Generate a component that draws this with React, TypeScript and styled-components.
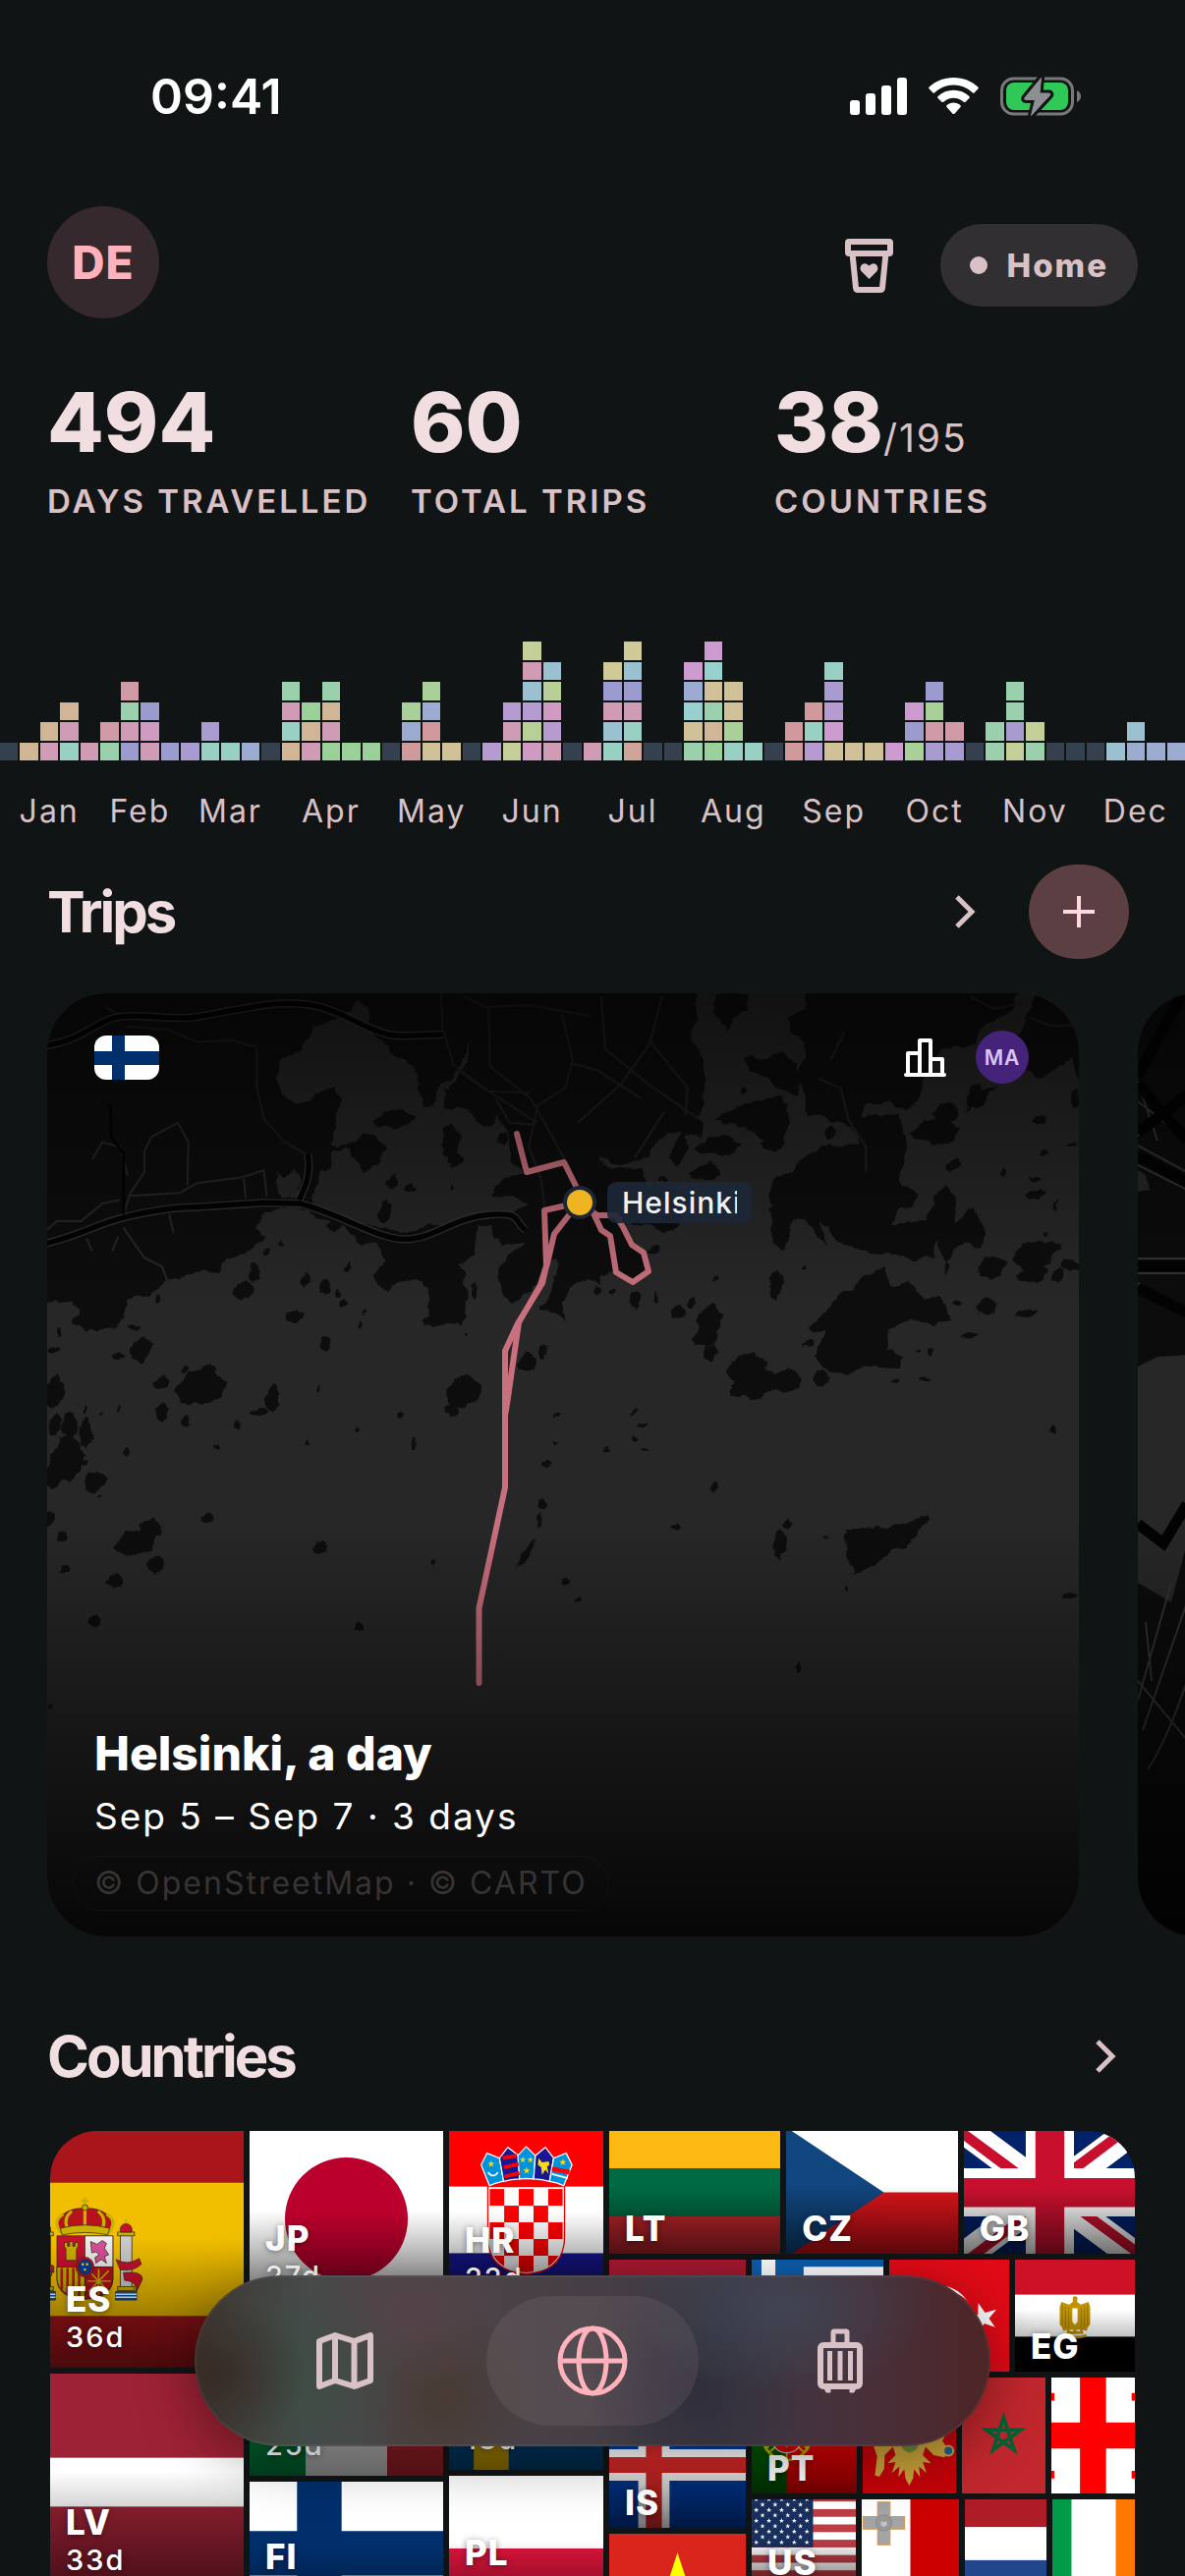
import React from "react";
import styled, { createGlobalStyle } from "styled-components";

const GlobalStyle = createGlobalStyle`
  * { box-sizing: border-box; }
  html, body { margin: 0; background: #111415; }
  body {
    font-family: Inter, Roboto, "Liberation Sans", sans-serif;
    color: #f0dee0;
  }
  button { font: inherit; color: inherit; border: 0; padding: 0; background: none; cursor: pointer; }
  h2, h3, p, dl, dd, dt { margin: 0; }
  svg { display: block; }
`;

/* ---------- layout ---------- */

const Screen = styled.div`
  height: 100vh;
  overflow-x: hidden;
  overflow-y: auto;
  scrollbar-width: none;
  background: #111415;
`;

const StatusBar = styled.div`
  display: flex;
  align-items: center;
  justify-content: space-between;
  height: 144px;
  padding: 52px 106px 0 153px;
  color: #fff;
`;

const Clock = styled.time`
  font-size: 50px;
  line-height: 64px;
  font-weight: 600;
`;

const StatusIcons = styled.div`
  display: flex;
  align-items: center;
  gap: 22px;
`;

const Header = styled.header`
  display: flex;
  align-items: center;
  justify-content: space-between;
  margin-top: 66px;
  padding: 0 48px;
`;

const Avatar = styled.button`
  width: 114px;
  height: 114px;
  border-radius: 50%;
  background: #35292d;
  color: #ffb2bc;
  font-size: 46px;
  font-weight: 800;
  letter-spacing: 1px;
`;

const HeaderActions = styled.div`
  display: flex;
  align-items: center;
  gap: 48px;
  padding-top: 6px;
`;

const IconButton = styled.button`
  display: flex;
  align-items: center;
  justify-content: center;
  color: #d8c2c6;
`;

const HomePill = styled.button`
  display: flex;
  align-items: center;
  gap: 19px;
  height: 84px;
  padding: 0 30px;
  border-radius: 42px;
  background: #312f31;
  color: #d8c2c6;
  font-size: 33px;
  font-weight: 800;
  letter-spacing: 2px;
`;

const Dot = styled.span`
  width: 18px;
  height: 18px;
  border-radius: 50%;
  background: #d8c2c6;
`;

const Stats = styled.dl`
  display: grid;
  grid-template-columns: repeat(3, 1fr);
  margin-top: 56px;
  padding: 0 48px;
`;

const Stat = styled.div`
  display: flex;
  flex-direction: column-reverse;
  gap: 6px;
`;

const StatLabel = styled.dt`
  font-size: 33px;
  line-height: 48px;
  font-weight: 600;
  letter-spacing: 3px;
  white-space: nowrap;
  color: #d8c2c6;
`;

const StatValue = styled.dd`
  font-size: 84px;
  line-height: 100px;
  font-weight: 800;
`;

const StatTotal = styled.span`
  font-size: 39px;
  line-height: 39px;
  font-weight: 400;
  letter-spacing: 2px;
  color: #d8c2c6;
`;

const Histogram = styled.div`
  display: grid;
  grid-template-columns: repeat(59, 1fr);
  column-gap: 2px;
  align-items: end;
  height: 180px;
  margin-top: 60px;
`;

const Week = styled.div`
  display: flex;
  flex-direction: column-reverse;
  gap: 2px;
`;

const Day = styled.span<{ $color: string }>`
  aspect-ratio: 1;
  background: ${(p) => p.$color};
`;

const Months = styled.div`
  display: grid;
  grid-template-columns: repeat(59, 1fr);
  column-gap: 2px;
  margin-top: 28px;
`;

const Month = styled.span<{ $span: number }>`
  grid-column: span ${(p) => p.$span};
  min-width: 0;
  display: flex;
  justify-content: center;
  font-size: 32px;
  line-height: 48px;
  letter-spacing: 2px;
  color: #d8c2c6;
`;

const SectionHeader = styled.div<{ $top: number; $right: number }>`
  display: flex;
  align-items: center;
  justify-content: space-between;
  margin-top: ${(p) => p.$top}px;
  padding: 0 ${(p) => p.$right}px 0 48px;
`;

const SectionTitle = styled.h2`
  font-size: 58px;
  line-height: 72px;
  font-weight: 700;
  letter-spacing: -3px;
`;

const SectionActions = styled.div`
  display: flex;
  align-items: center;
  gap: 54px;
`;

const AddButton = styled.button`
  display: flex;
  align-items: center;
  justify-content: center;
  width: 102px;
  height: 96px;
  border-radius: 48px;
  background: #5b3f42;
  color: #ffd9dd;
`;

const Carousel = styled.div`
  display: flex;
  gap: 60px;
  margin-top: 35px;
  padding-left: 48px;
  overflow: hidden;
`;

const TripCard = styled.article`
  position: relative;
  flex: 0 0 calc(100% - 108px);
  height: 960px;
  border-radius: 60px;
  overflow: hidden;
  background: #262626;
`;

const MapArt = styled.svg`
  position: absolute;
  inset: 0;
  width: 100%;
  height: 100%;
`;

const CardBody = styled.div`
  position: absolute;
  inset: 0;
  display: flex;
  flex-direction: column;
  justify-content: space-between;
  padding: 38px 51px 26px 48px;
  background: linear-gradient(
    rgba(0, 0, 0, 0.55) 0%,
    rgba(0, 0, 0, 0) 33%,
    rgba(0, 0, 0, 0) 56%,
    rgba(0, 0, 0, 0.35) 74%,
    rgba(0, 0, 0, 0.84) 100%
  );
`;

const CardTop = styled.div`
  display: flex;
  align-items: center;
  justify-content: space-between;
`;

const CardTopRight = styled.div`
  display: flex;
  align-items: center;
  gap: 30px;
  color: #fff;
`;

const FlagBadge = styled.span`
  width: 66px;
  height: 45px;
  border-radius: 12px;
  overflow: hidden;
`;

const Companion = styled.span`
  display: flex;
  align-items: center;
  justify-content: center;
  width: 54px;
  height: 54px;
  border-radius: 50%;
  background: #46237a;
  color: #dcc3f5;
  font-size: 21px;
  font-weight: 600;
  letter-spacing: 1px;
`;

const Pin = styled.div`
  position: absolute;
  left: 50%;
  top: 192px;
  display: flex;
  align-items: center;
  gap: 11px;
`;

const PinDot = styled.span`
  width: 34px;
  height: 34px;
  border: 4px solid #1c2635;
  border-radius: 50%;
  background: #eeb422;
`;

const PinLabel = styled.span`
  padding: 0 15px;
  border-radius: 9px;
  background: rgba(28, 39, 55, 0.9);
`;

const PinText = styled.span`
  display: block;
  width: 117px;
  overflow: hidden;
  white-space: nowrap;
  font-size: 30px;
  line-height: 42px;
  font-weight: 500;
  letter-spacing: 1px;
  color: #eef2f7;
`;

const TripTitle = styled.h3`
  font-size: 48px;
  line-height: 60px;
  font-weight: 800;
  color: #fff;
`;

const TripDates = styled.p`
  margin-top: 10px;
  font-size: 37px;
  line-height: 48px;
  letter-spacing: 2px;
  color: #fff;
`;

const Attribution = styled.p`
  width: max-content;
  margin: 16px 0 0 -22px;
  padding: 0 21px;
  border: 1px solid rgba(255, 255, 255, 0.03);
  border-radius: 28px;
  font-size: 32px;
  line-height: 54px;
  letter-spacing: 2px;
  color: #363334;
`;

/* ---------- country mosaic ---------- */

const Mosaic = styled.div`
  display: flex;
  align-items: flex-start;
  gap: 6px;
  margin: 40px 51px 0;
  padding-bottom: 200px;
  border-radius: 48px 48px 0 0;
  overflow: hidden;
`;

const Stack = styled.div<{ $grow: number }>`
  display: flex;
  flex-direction: column;
  flex: ${(p) => p.$grow} 1 0;
  min-width: 0;
  gap: 6px;
`;

const Strip = styled.div`
  display: flex;
  gap: 6px;
`;

const Tile = styled.div<{ $h: number; $grow?: number }>`
  position: relative;
  flex: ${(p) => (p.$grow ? `${p.$grow} 1 0` : "none")};
  min-width: 0;
  height: ${(p) => p.$h}px;
  overflow: hidden;
`;

const FlagSvg = styled.svg`
  position: absolute;
  inset: 0;
  width: 100%;
  height: 100%;
`;

const TileCaption = styled.div<{ $days: boolean }>`
  position: absolute;
  inset: 0;
  display: flex;
  flex-direction: column;
  justify-content: flex-end;
  padding: 0 16px ${(p) => (p.$days ? 12 : 6)}px;
  background: linear-gradient(rgba(0, 0, 0, 0) 45%, rgba(0, 0, 0, 0.56) 100%);
  color: #fff;
  text-shadow: 0 1px 6px rgba(0, 0, 0, 0.45);
`;

const TileCode = styled.span`
  font-size: 35px;
  line-height: 40px;
  font-weight: 800;
  letter-spacing: 1px;
`;

const TileDays = styled.span`
  font-size: 29px;
  line-height: 38px;
  font-weight: 500;
  letter-spacing: 2px;
`;

/* ---------- bottom navigation ---------- */

const Nav = styled.nav`
  position: fixed;
  left: 50%;
  bottom: 132px;
  transform: translateX(-50%);
  display: flex;
  align-items: center;
  gap: 36px;
  height: 174px;
  padding: 0 45px;
  border-radius: 87px;
  background:
    radial-gradient(ellipse 90px 80px at 3% 58%, rgba(54, 38, 34, 0.8), rgba(54, 38, 34, 0)),
    radial-gradient(ellipse 110px 120px at 13% 62%, rgba(60, 78, 68, 0.8), rgba(60, 78, 68, 0)),
    radial-gradient(ellipse 110px 80px at 27% 20%, rgba(86, 66, 72, 0.8), rgba(86, 66, 72, 0)),
    radial-gradient(ellipse 90px 100px at 31% 72%, rgba(72, 56, 46, 0.8), rgba(72, 56, 46, 0)),
    radial-gradient(ellipse 150px 90px at 74% 18%, rgba(64, 72, 88, 0.8), rgba(64, 72, 88, 0)),
    radial-gradient(ellipse 110px 120px at 63% 70%, rgba(46, 44, 58, 0.8), rgba(46, 44, 58, 0)),
    linear-gradient(90deg, #3d362f 0%, #47494a 14%, #4b4448 30%, #453f45 50%, #3b3843 66%, #48303a 84%, #4d2526 100%);
  box-shadow: 0 12px 60px rgba(0, 0, 0, 0.4), inset 0 0 0 2px rgba(255, 255, 255, 0.05);
`;

const NavButton = styled.button<{ $active?: boolean }>`
  display: flex;
  align-items: center;
  justify-content: center;
  width: 216px;
  height: 132px;
  border-radius: 66px;
  background: ${(p) => (p.$active ? "rgba(255, 214, 222, 0.08)" : "transparent")};
  color: ${(p) => (p.$active ? "#ffb2bc" : "#d8c2c6")};
`;

/* ---------- data ---------- */

const palette: Record<string, string> = {
  S: "#364150", n: "#d0b597", p: "#d09bb4", r: "#d09ba7", e: "#d0999b", o: "#d0a498",
  t: "#98d0c3", a: "#98d0cf", c: "#9bc0d0", b: "#9bacd0", i: "#9b9bd0", v: "#a79bd0",
  u: "#b59bd0", f: "#cd9bd0", k: "#d09bc3", g: "#9bd09b", h: "#9bd0ad", l: "#a9d098",
  y: "#b8d098", z: "#c5d098", w: "#d0ca98", d: "#d0c198",
};

/* one word per week, one letter per travelled day, first day at the bottom */
const weeks = (
  "S n pn tpn p hr iphr pki i v tv t b S ntph png gpnh g g S ebl debl d S u zpu kyucpz pukyc S p " +
  "tcpiw otpicw S S hdabf gnhdaf tldd t S ee ute dfuvt d d f lif vrli vr S hh zvhh hz S S S c bc b b"
).split(" ");

const months: [string, number][] = [
  ["Jan", 5], ["Feb", 4], ["Mar", 5], ["Apr", 5], ["May", 5], ["Jun", 5],
  ["Jul", 5], ["Aug", 5], ["Sep", 5], ["Oct", 5], ["Nov", 5], ["Dec", 5],
];

/* ---------- flags, drawn on a 640 x 480 field ---------- */

const Bands = ({ colors, vertical, cuts }: { colors: string[]; vertical?: boolean; cuts?: number[] }) => {
  const size = vertical ? 640 : 480;
  const at = cuts ?? colors.map((_, n) => (n * size) / colors.length);
  return (
    <>
      {colors.map((c, n) =>
        vertical ? (
          <rect key={n} x={at[n]} width={640 - at[n]} height="480" fill={c} />
        ) : (
          <rect key={n} y={at[n]} width="640" height={480 - at[n]} fill={c} />
        ),
      )}
    </>
  );
};

const starPoints = (cx: number, cy: number, r: number) =>
  Array.from({ length: 10 }, (_, n) => {
    const a = (Math.PI / 5) * n - Math.PI / 2;
    const q = n % 2 ? r * 0.382 : r;
    return `${(cx + q * Math.cos(a)).toFixed(1)},${(cy + q * Math.sin(a)).toFixed(1)}`;
  }).join(" ");

const flags: Record<string, React.ReactNode> = {
  ES: (
    <>
      <Bands colors={["#aa151b", "#f1bf00", "#aa151b"]} cuts={[0, 120, 360]} />
      <g transform="translate(158 163) scale(.95 .85)" stroke="#3a2a10" strokeWidth="1.5">
        {[-44, 110].map((x) => (
          <g key={x} transform={`translate(${x} 0)`}>
            <rect x="10" y="62" width="22" height="112" fill="#ccc" />
            <rect x="5" y="54" width="32" height="8" fill="#c8b100" />
            <rect x="5" y="170" width="32" height="8" fill="#c8b100" />
            <path d="M1 180h40v18H1z" fill="#005bbf" />
            <path d="M1 186h40M1 192h40" stroke="#fff" strokeWidth="3" />
            <path d="M10 54q-2-16 11-18q13 2 11 18z" fill="#c8102e" />
            <path d="M21 26v10" stroke="#c8b100" strokeWidth="4" />
          </g>
        ))}
        <path d="M4 112l34 14v14L2 126zM4 148l30-12v10L8 160z" fill="#c8102e" transform="translate(-44 0)" />
        <path d="M112 112q22 14 44-2l4 12q-14 16-40 12zM126 140q36-4 36 14l-12 28q4-24-22-26z" fill="#c8102e" />
        <path d="M0 62h106v90q0 42-53 44q-53-2-53-44z" fill="#c8102e" />
        <path d="M53 62h53v66H53z" fill="#eee" />
        <path d="M0 128h53v66q-53-6-53-42z" fill="#c8b100" />
        <path d="M9 130v46M20 130v56M31 130v60M42 130v62" stroke="#c8102e" strokeWidth="5" />
        <path d="M53 128h53v24q0 40-53 44z" fill="#b5121b" />
        <path d="M60 136l38 44M98 136l-38 44M79 132v56M58 158h44" stroke="#c8b100" strokeWidth="3" fill="none" />
        <path d="M14 84v-8h6v8h4v-10h6v10h4v-8h6v8l-3 6v24H17V90z" fill="#c8b100" />
        <path d="M64 74l12 6 10-8 8 6-4 10 8 14-8 4 4 14-10-8-10 8-2-12 8-6-6-6-8 2z" fill="#db4e9b" />
        <ellipse cx="53" cy="128" rx="17" ry="21" fill="#c8102e" />
        <ellipse cx="53" cy="128" rx="13" ry="16" fill="#0b3d91" />
        <path d="M47 120h4v5h-4zM55 120h4v5h-4zM51 131h4v5h-4z" fill="#ffd700" stroke="none" />
        <path d="M8 56Q-10 30 12 16q16-14 41-12q25-2 41 12q22 14 4 40q-45-12-90 0z" fill="#b5121b" />
        <path d="M8 56Q-10 30 12 16M98 56q18-26-4-40M24 54Q8 28 28 10M82 54Q98 28 78 10M53 50V4" stroke="#c8b100" strokeWidth="6" fill="none" />
        <path d="M6 46q47-14 94 0l-4 14q-43-10-86 0z" fill="#c8b100" />
        <path d="M53-20v24M46-12h14" stroke="#c8b100" strokeWidth="5" />
        <circle cx="53" cy="2" r="6" fill="#c8b100" />
      </g>
    </>
  ),
  LV: <Bands colors={["#9d2235", "#fff", "#9d2235"]} cuts={[0, 192, 288]} />,
  JP: (
    <>
      <Bands colors={["#fff"]} />
      <circle cx="320" cy="240" r="149" fill="#bc002d" />
    </>
  ),
  IT: <Bands vertical colors={["#009246", "#fff", "#ce2b37"]} />,
  FI: (
    <>
      <Bands colors={["#fff"]} />
      <path d="M0 174h640v131H0zM175 0h131v480H175z" fill="#002f6c" />
    </>
  ),
  HR: (
    <>
      <Bands colors={["#f00", "#fff", "#171796"]} />
      <path d="M228 160h184v120q0 84-92 90q-92-6-92-90z" fill="#fff" stroke="#f00" strokeWidth="3" />
      <clipPath id="hr-shield">
        <path d="M232 166h176v114q0 80-88 86q-88-6-88-86z" />
      </clipPath>
      <g clipPath="url(#hr-shield)" fill="#f00">
        {Array.from({ length: 25 }, (_, n) => n)
          .filter((n) => n % 2 === 0)
          .map((n) => (
            <rect key={n} x={232 + (n % 5) * 35.2} y={166 + Math.floor(n / 5) * 40} width="35.2" height="40" />
          ))}
      </g>
      <g stroke="#fff" strokeWidth="3">
        <path d="M232 158l-20-50 14-28 30 12 10 56q-18 2-34 10z" fill="#0093dd" />
        <path d="M266 148l-10-56 20-26 26 20 2 56q-20 0-38 6z" fill="#171796" />
        <path d="M304 142l-4-56 20-22 22 22-4 56q-18-2-34 0z" fill="#0093dd" />
        <path d="M338 142l4-56 24-20 20 26-10 56q-18-6-38-6z" fill="#171796" />
        <path d="M376 148l10-56 30-12 14 28-20 50q-16-8-34-10z" fill="#0093dd" />
      </g>
      <path d="M264 92l34-6M266 114l36-8M268 136l36-8" stroke="#f00" strokeWidth="9" />
      <path d="M382 118l42 8" stroke="#f00" strokeWidth="11" />
      <path d="M382 130l38 10" stroke="#fff" strokeWidth="4" />
      <g fill="#f7db17">
        <polygon points={starPoints(236, 106, 9)} />
        <polygon points={starPoints(312, 96, 8)} />
        <polygon points={starPoints(330, 96, 8)} />
        <polygon points={starPoints(321, 122, 9)} />
        <polygon points={starPoints(408, 102, 9)} />
        <path d="M350 92l8 10 16-2 2 8-6 4 4 18-8-10-8 12-2-18-8-6z" />
      </g>
      <path d="M228 126q14 16 24 0" stroke="#fff" strokeWidth="4" fill="none" />
    </>
  ),
  SE: (
    <>
      <Bands colors={["#005293"]} />
      <path d="M176 0v192H0v96h176v192h96V288h368v-96H272V0z" fill="#fecb00" />
    </>
  ),
  PL: <Bands colors={["#fff", "#dc143c"]} />,
  LT: <Bands colors={["#fdb913", "#006a44", "#c1272d"]} />,
  CZ: (
    <>
      <Bands colors={["#fff", "#d7141a"]} />
      <path d="M0 0v480l360-240z" fill="#11457e" />
    </>
  ),
  GB: (
    <>
      <Bands colors={["#012169"]} />
      <path d="M75 0l244 181L562 0h78v62L400 241l240 178v61h-80L320 301 81 480H0v-60l239-178L0 64V0h75z" fill="#fff" />
      <path d="M424 281l216 159v40L369 281h55zm-184 20l6 35L54 480H0l240-179zM640 0v3L391 191l2-44L590 0h50zM0 0l239 176h-60L0 42V0z" fill="#c8102e" />
      <path d="M241 0v480h160V0H241zM0 160v160h640V160H0z" fill="#fff" />
      <path d="M0 193v96h640v-96H0zM273 0v480h96V0h-96z" fill="#c8102e" />
    </>
  ),
  TH: <Bands colors={["#a51931", "#f4f5f8", "#2d2a4a", "#f4f5f8", "#a51931"]} cuts={[0, 80, 160, 320, 400]} />,
  IS: (
    <>
      <Bands colors={["#003897"]} />
      <path d="M187 0h106v187h347v106H293v187H187V293H0V187h187z" fill="#fff" />
      <path d="M213 0h54v213h373v54H267v213h-54V267H0v-54h213z" fill="#d72828" />
    </>
  ),
  VN: (
    <>
      <Bands colors={["#da251d"]} />
      <polygon points={starPoints(320, 245, 150)} fill="#ff0" />
    </>
  ),
  GR: (
    <>
      <Bands colors={["#0d5eaf"]} />
      <path d="M0 80h640M0 187h640M0 293h640M0 400h640" stroke="#fff" strokeWidth="53" />
      <path d="M0 0h267v267H0z" fill="#0d5eaf" />
      <path d="M133 0v267M0 133h267" stroke="#fff" strokeWidth="53" />
    </>
  ),
  TR: (
    <>
      <Bands colors={["#e30a17"]} />
      <circle cx="285" cy="247" r="121" fill="#fff" />
      <circle cx="315" cy="247" r="97" fill="#e30a17" />
      <path d="M430.7 191.5l-1 44.3-41.3 11.2 40.8 14.5-1 40.7 26.5-31.8 40.2 14-23.2-34.1 28.3-33.9-43.5 12-25.8-37z" fill="#fff" />
    </>
  ),
  EG: (
    <>
      <Bands colors={["#ce1126", "#fff", "#000"]} />
      <g fill="#c09300">
        <path d="M312 170q8-8 18 2l-2 16 14 10 30-10 6 20v66l-8 10-6 14-14-4 2 16h-64l2-16-14 4-6-14-8-10v-66l6-20 30 10 14-10z" />
        <path d="M276 310q44 14 88 0v10q-44 16-88 0z" />
      </g>
      <path d="M310 212h20v50l-10 14-10-14z" fill="#fff" />
      <path d="M272 200v76M284 206v80M296 210v76M344 210v76M356 206v80M368 200v76" stroke="#8a6a00" strokeWidth="3" />
      <path d="M300 296h14M326 296h14" stroke="#fff" strokeWidth="5" />
    </>
  ),
  PT: (
    <>
      <Bands vertical colors={["#060", "#f00"]} cuts={[0, 256]} />
      <circle cx="256" cy="240" r="90" fill="none" stroke="#e8d800" strokeWidth="10" />
      <path d="M170 220q86 60 172 0M180 290q76-110 152 0M256 150v180M190 180l132 124M322 180L190 304" stroke="#e8d800" strokeWidth="7" fill="none" />
      <path d="M206 176h100v80q0 44-50 48q-50-4-50-48z" fill="#f00" stroke="#fff" strokeWidth="4" />
      <path d="M228 198h56v56q0 24-28 28q-28-4-28-28z" fill="#fff" />
      <path d="M250 206h12v12h-12zM250 228h12v12h-12zM250 250h12v12h-12zM234 228h10v12h-10zM268 228h10v12h-10z" fill="#039" />
    </>
  ),
  ME: (
    <>
      <Bands colors={["#c40308"]} />
      <g fill="#c9a33a">
        <path d="M320 120l20 30 60-50 60 40 10 60-30 60 20 30-12 30-40-8-30-30-10 30 30 30-30-4 14 40-28-24 4 40-22-30-4 34-14 26-14-26-4-34-22 30 4-40-28 24 14-40-30 4 30-30-10-30-30 30-2 50-18 30-16-6 8-70-14-40 12-24-30-60 10-60 60-40 60 50z" />
      </g>
      <path d="M286 190h68v70q0 36-34 44q-34-8-34-44z" fill="#6a8a3c" />
      <circle cx="462" cy="296" r="18" fill="#1d5e91" stroke="#c9a33a" strokeWidth="7" />
    </>
  ),
  MA: (
    <>
      <Bands colors={["#c1272d"]} />
      <path d="M320 179.5l-35.4 108.9 92.7-67.3H262.7l92.7 67.3z" fill="none" stroke="#006233" strokeWidth="12" transform="translate(-32 -24) scale(1.1)" />
    </>
  ),
  GE: (
    <>
      <Bands colors={["#fff"]} />
      <path d="M272 0h96v192h272v96H368v192h-96V288H0v-96h272z" fill="#f00" />
      <path d="M92 84h86v28H92zM121 55h28v86h-28zM462 84h86v28h-86zM491 55h28v86h-28zM92 370h86v28H92zM121 341h28v86h-28zM462 370h86v28h-86zM491 341h28v86h-28z" fill="#f00" />
    </>
  ),
  US: (
    <>
      <Bands colors={["#fff"]} />
      {Array.from({ length: 7 }, (_, n) => (
        <rect key={n} y={n * 73.8} width="640" height="37" fill="#bd3d44" />
      ))}
      <path d="M0 0h365v258H0z" fill="#192f5d" />
      <g fill="#fff">
        {Array.from({ length: 9 }, (_, row) =>
          Array.from({ length: row % 2 ? 5 : 6 }, (_, col) => (
            <polygon key={`${row}-${col}`} points={starPoints(30 + col * 61 + (row % 2) * 30, 26 + row * 26, 13)} />
          )),
        )}
      </g>
    </>
  ),
  MT: (
    <>
      <Bands vertical colors={["#fff", "#c00"]} />
      <path d="M162 40h60v70h70v60h-70v76h-60v-76H92v-60h70z" fill="#a4a4a4" stroke="#d9974a" strokeWidth="5" />
      <circle cx="192" cy="140" r="38" fill="#9a9a9a" stroke="#777" strokeWidth="3" />
      <path d="M176 126l14 10 16-10 4 26-18 10-16-8z" fill="#c4c4c4" stroke="#777" strokeWidth="2" />
    </>
  ),
  NL: <Bands colors={["#ae1c28", "#fff", "#21468b"]} />,
  IE: <Bands vertical colors={["#009a49", "#fff", "#ff7900"]} />,
};

const Country = ({ code, h, grow, days, label = true }: { code: string; h: number; grow?: number; days?: number; label?: boolean }) => (
  <Tile $h={h} $grow={grow}>
    <FlagSvg viewBox="35.5 26.7 569 426.6" preserveAspectRatio="xMidYMid slice" aria-hidden="true">
      {flags[code]}
    </FlagSvg>
    {label && (
      <TileCaption $days={days !== undefined}>
        <TileCode>{code}</TileCode>
        {days !== undefined && <TileDays>{days}d</TileDays>}
      </TileCaption>
    )}
  </Tile>
);

/* ---------- maps ---------- */

const westIslands: [number, number, number, number][] = [
  [165, 960, 65, 26], [290, 1045, 30, 38], [225, 1065, 22, 14], [345, 1140, 26, 24], [355, 1225, 14, 26],
  [450, 1150, 56, 44], [480, 1110, 22, 22], [415, 1098, 14, 12], [725, 950, 26, 20], [815, 1030, 15, 22],
  [660, 1190, 20, 30], [610, 1228, 14, 9], [580, 880, 34, 24], [612, 830, 20, 30], [758, 845, 11, 20], [815, 868, 17, 24],
  [866, 914, 12, 15], [848, 884, 7, 14], [1200, 1180, 34, 36], [1170, 1215, 18, 16], [1200, 1135, 14, 20], [1390, 1080, 26, 27],
  [1438, 1055, 13, 24], [1005, 570, 15, 22], [1055, 588, 16, 12], [1172, 455, 26, 52], [1190, 505, 24, 18], [1010, 390, 60, 26],
  [985, 650, 16, 36], [840, 695, 20, 14], [920, 730, 15, 14], [876, 812, 12, 13], [40, 1170, 34, 42], [85, 1240, 18, 20],
  [45, 1260, 18, 34], [130, 1275, 18, 36], [80, 1330, 36, 42], [40, 1400, 24, 46], [125, 1370, 14, 10], [160, 1422, 30, 26],
  [248, 1342, 10, 9], [420, 1250, 12, 18], [565, 1265, 7, 12], [505, 1324, 9, 5], [30, 1525, 16, 20], [310, 1545, 22, 14],
  [480, 1528, 14, 12], [1028, 1230, 8, 8], [1447, 1374, 13, 9], [1435, 1485, 13, 13], [1478, 1228, 9, 5], [765, 1314, 5, 7],
  [1065, 1312, 4, 14], [907, 1276, 4, 10], [800, 1160, 5, 12], [915, 980, 8, 14], [922, 940, 6, 6], [55, 997, 7, 11], [40, 1045, 20, 9],
  [270, 980, 16, 8], [338, 905, 7, 13], [645, 770, 12, 10], [690, 747, 7, 8], [1320, 445, 14, 20], [1175, 586, 6, 7], [1213, 1002, 5, 5],
  [172, 1463, 7, 5], [227, 1218, 6, 10], [1470, 1314, 7, 8], [1240, 880, 12, 26], [125, 1220, 7, 12], [175, 1228, 6, 4],
];

const eastIslands: [number, number, number, number][] = [
  [378, 466, 58, 30], [345, 540, 42, 26], [520, 452, 32, 32], [525, 860, 20, 44], [550, 1130, 38, 30], [640, 1125, 18, 28],
  [455, 1100, 52, 48], [430, 1160, 24, 22], [355, 960, 36, 44], [345, 1010, 32, 30], [358, 1055, 20, 24], [275, 940, 18, 20],
  [310, 915, 9, 16], [168, 900, 16, 26], [110, 885, 12, 10], [70, 875, 10, 10], [222, 900, 5, 16], [475, 1180, 16, 16],
  [930, 425, 60, 40], [960, 370, 30, 30], [980, 520, 20, 18], [1180, 780, 52, 48], [1180, 830, 40, 26], [1225, 755, 30, 16],
  [1075, 810, 36, 34], [1245, 835, 18, 22], [1275, 805, 22, 16], [1060, 925, 26, 26], [1160, 945, 26, 12], [1020, 1005, 20, 10],
  [1188, 603, 26, 14], [1208, 488, 12, 13], [1198, 390, 16, 9], [1185, 562, 16, 9], [1105, 540, 8, 14], [1280, 460, 16, 7],
  [1238, 636, 4, 13], [905, 1128, 11, 7], [825, 1136, 9, 5], [920, 1052, 7, 12], [888, 1052, 6, 6], [988, 916, 14, 9],
  [1232, 1276, 6, 12], [183, 1262, 12, 6], [190, 1334, 9, 6], [90, 1330, 8, 7], [168, 1302, 7, 6], [160, 1225, 7, 8],
  [366, 1440, 10, 12], [215, 760, 12, 14], [375, 845, 9, 9], [598, 815, 7, 9], [845, 615, 40, 34], [555, 1545, 10, 14], [270, 1552, 14, 8],
  [545, 640, 36, 60], [665, 430, 12, 16], [440, 312, 10, 9], [235, 560, 12, 8], [1035, 325, 24, 34], [900, 1530, 18, 10], [1290, 330, 12, 30],
  [608, 1028, 14, 10], [1215, 718, 6, 6], [960, 818, 5, 16],
];

const southIslands: [number, number, number, number][] = [
  [265, 30, 36, 50], [215, 95, 8, 26], [360, 58, 10, 34], [345, 92, 8, 12], [612, 40, 24, 44], [598, 88, 8, 18],
  [1000, 20, 34, 36], [1042, 18, 20, 26], [1088, 12, 10, 20], [90, 220, 20, 54], [74, 240, 12, 50], [92, 130, 12, 34], [114, 150, 8, 40],
  [125, 272, 15, 30], [178, 432, 26, 34], [200, 395, 13, 26], [206, 488, 10, 22], [82, 415, 9, 14], [152, 530, 12, 24], [424, 442, 12, 18],
  [275, 370, 8, 13], [126, 632, 9, 14], [474, 648, 5, 13], [1032, 436, 9, 38], [1042, 382, 5, 12], [718, 330, 6, 14], [714, 374, 3, 22],
  [724, 230, 7, 11], [848, 128, 7, 6], [738, 98, 4, 6], [895, 392, 7, 11], [944, 288, 6, 12], [750, 530, 5, 9], [765, 576, 4, 6],
  [1416, 566, 8, 9], [1393, 142, 4, 12], [530, 100, 4, 9], [570, 484, 4, 6], [315, 130, 5, 13], [167, 202, 5, 8], [287, 184, 5, 5],
  [1058, 754, 3, 16], [66, 850, 3, 8], [840, 165, 4, 7], [800, 188, 4, 6], [852, 192, 4, 5], [66, 370, 6, 22], [73, 30, 12, 34],
  [1120, 546, 3, 5], [1093, 420, 3, 5], [86, 500, 7, 10], [548, 176, 3, 14], [473, 140, 3, 9], [407, 176, 3, 6], [1184, 14, 6, 5], [1226, 10, 6, 5],
];

const Blobs = ({ list }: { list: [number, number, number, number][] }) => (
  <>
    {list.map(([cx, cy, rx, ry], n) => (
      <path
        key={n}
        d={`M${cx - rx} ${cy + ry * 0.2}L${cx - rx * 0.5} ${cy - ry * 0.7}L${cx + rx * 0.3} ${cy - ry}L${cx + rx} ${cy - ry * 0.3}L${cx + rx * 0.8} ${cy + ry * 0.5}L${cx} ${cy + ry}L${cx - rx * 0.8} ${cy + ry * 0.7}z`}
      />
    ))}
  </>
);

const HelsinkiMap = () => (
  <MapArt viewBox="0 0 1050 960" preserveAspectRatio="xMidYMid slice" aria-hidden="true">
    <defs>
      <filter id="coast" x="-5%" y="-5%" width="110%" height="110%">
        <feTurbulence type="fractalNoise" baseFrequency="0.07" numOctaves="3" seed="4" result="noise" />
        <feDisplacementMap in="SourceGraphic" in2="noise" scale="9" xChannelSelector="R" yChannelSelector="G" />
      </filter>
    </defs>
    <rect width="1050" height="960" fill="#272727" />
    <g filter="url(#coast)" fill="#0c0c0c">
      <g transform="translate(-8 -11) scale(.3571)">
        <path d="M-30-30H1600V860L1545 845 1510 880 1490 920 1500 968 1465 940 1430 935 1470 850 1475 785 1440 800 1420 860 1345 915 1320 890 1305 840 1330 780 1390 740 1320 750 1290 720 1285 690 1250 690 1245 780 1190 800 1215 830 1218 960 1200 980 1140 975 1100 985 1090 965 1115 950 1110 880 1090 845 1020 850 990 880 960 860 950 830 985 790 960 740 920 745 870 700 780 660 720 640 640 650 620 700 640 720 600 765 530 790 515 825 440 822 400 845 360 850 320 895 250 900 240 960 215 990 150 985 130 1000 95 970 110 940 95 910-30 915z" />
        <path d="M900 50 935 70 945 145 1000 195 1050 225 1085 280 1083 330 1095 360 1125 350 1130 305 1150 310 1155 355 1215 365 1235 385 1265 415 1295 400 1305 375 1330 410 1340 470 1345 510 1380 545 1330 555 1300 580 1285 605 1350 610 1395 635 1340 660 1290 665 1200 680 1120 690 1050 715 1000 705 920 690 830 655 780 635 785 590 800 540 835 530 835 480 880 475 900 500 925 545 960 520 990 470 960 440 925 430 880 465 830 465 845 400 860 330 840 290 800 315 770 335 730 350 690 320 675 270 690 215 750 190 780 130 850 100 890 80z" fill="#272727" />
        <path d="M680 615V545L700 560 730 530 748 560 735 610zM1130 310 1180 270 1210 210 1228 160 1218 230 1165 310zM1510 430 1525 405 1545 440 1550 490 1520 510z" fill="#272727" />
        <Blobs list={westIslands} />
      </g>
      <g transform="translate(532 -11) scale(.3992 .3571)">
        <path d="M326-30H600V75L555 100 565 150 600 170 595 215 580 260 600 330 605 380 640 370 665 400 700 400 735 440 740 470 700 480 660 460 600 490 570 540 530 550 505 610 520 650 515 740 545 765 570 680 600 680 650 755 640 680 690 740 740 765 810 765 880 795 930 780 930 730 960 800 1000 740 1050 760 1060 720 1030 640 1010 660 980 690 985 620 960 580 930 600 930 640 900 680 820 690 810 670 870 630 870 600 835 560 860 480 840 380 800 375 740 385 760 350 820 340 860 370 895 330 900 270 945 190 1035 175 1060 120 1130 80 1150-30H1400V280L1297 280 1280 210 1200 275 1150 240 1140 150 1160 110 1185 40 1185-30 1600-30V-60H326z" />
        <path d="M-20-30H326L325 110 305 160 330 200 345 270 340 350 320 380 335 410 330 440 300 430 300 480 270 530 255 490 285 425 250 430 215 460 200 500 130 520 85 500 60 470 50 490 100 525 185 530 190 580 320 590 280 690 240 715 195 690 130 680 158 745 188 768 200 820 161 852 118 824 30 850-20 845z" />
        <path d="M326 0H600V75L555 100 565 150 600 170 595 215 580 260 600 330 560 320 520 270 480 250 445 215 500 205 570 210 450 40 460 60 440 95 410 110 400 145 385 110 360 80 370 40 326 30z" fill="#272727" />
        <path d="M370 30H455L450 80 415 100 402 145 388 115 365 85zM445 210 500 215 545 200 575 230 590 280 575 325 530 300 490 265 455 245zM370 390 440 345 530 325 555 350 560 400 540 450 490 445 420 405z" />
        <path d="M750 840 800 810 820 870 860 850 905 900 940 895 975 960 930 980 870 960 810 990 810 1050 850 1065 840 1100 750 1090 710 1120 665 1110 625 1065 650 1000 605 990 640 950 670 910 710 880z" />
        <path d="M680 470 740 460 735 440 760 385 840 380 860 480 835 560 870 600 820 690 900 680 930 780 740 765 640 680 600 600 590 500z" />
        <path d="M1010 370 1040 310 1090 290 1070 310 1040 350zM710 1568 750 1550 800 1552 850 1568zM880 1560 912 1518 895 1560z" />
        <Blobs list={eastIslands} />
      </g>
      <g transform="translate(-48 389) scale(.7691 .3954)">
        <path d="M1120 400 1145 388 1170 395 1195 385 1228 358 1200 445 1180 452 1130 520 1118 450zM710 418 700 470 683 500 690 460z" />
        <Blobs list={southIslands} />
      </g>
    </g>
    <g fill="none" transform="translate(-8 -11) scale(.3571)">
      <g stroke="#262626" strokeWidth="6">
        <path d="M22 705 50 680 120 680 180 630 230 620M260 608 400 600 450 572 580 555 640 535 648 610M240 660 260 600 300 540 300 480 320 440 395 400 425 455 422 580M583 560 588 615M150 505 180 455 230 470 252 550M240 700 300 785 350 810 365 850M370 660 382 715M135 730 150 765M225 725 208 765" />
        <path d="M190 70 240 100M250 125 370 135 450 170 550 165 620 185 620 300 640 390 700 455 760 490M1145 30 1150 130 1180 235 1280 310 1420 400M1280 70 1285 240 1400 330 1440 400 1500 510M1190 250 1280 310 1400 315M1210 40 1270 70 1400 65 1568 95M1490 90 1520 220 1500 300 1420 350 1395 470 1430 560 1440 640M1300 330 1340 400 1410 405" stroke="#1d1d1d" />
      </g>
      <path d="M15 745C120 720 160 690 240 670S390 640 450 640L640 628 740 630C860 660 960 730 1040 732S1180 670 1280 662 1350 680 1385 705M15 180C110 170 150 120 210 102S380 110 450 98 640 60 700 60 800 60 900 110 1010 155 1150 148M740 620C760 580 775 540 765 490" stroke="#3a3a3a" strokeWidth="23" opacity=".75" />
      <path d="M15 745C120 720 160 690 240 670S390 640 450 640L640 628 740 630C860 660 960 730 1040 732S1180 670 1280 662 1350 680 1385 705M15 180C110 170 150 120 210 102S380 110 450 98 640 60 700 60 800 60 900 110 1010 155 1150 148M740 620C760 580 775 540 765 490" stroke="#030303" strokeWidth="15" />
      <path d="M203 350 205 440 240 490 240 660" stroke="#030303" strokeWidth="8" />
    </g>
    <path
      d="M80 40 90 190 200 290 330 390M235 40 205 170 300 300 295 380M0 230 70 250 180 330M210 165 130 290 20 400M240 370 165 500M635 275 690 300 710 390 755 470 755 540M700 140 665 220M1170 100 1230 125 1290 120M1020 40 1080 75 1150 60"
      transform="translate(532 -11) scale(.3992 .3571)"
      fill="none"
      stroke="#1f1f1f"
      strokeWidth="6"
    />
    <g fill="none" stroke="#c9707e" strokeWidth="6" strokeLinejoin="round" strokeLinecap="round">
      <path d="M478 143 488 182 526 172 541 202M541 213 506 221 508 277 504 295 479 336 466 364V503L439.500 626V702M541 213 516 245 509 275 502 297 480 335 468 418 466 430" />
      <path d="M541 213 560 226 579 226 586 238 595 256 607 264 612 283 596 294 579 284 573 247 564 241 556 224" />
    </g>
  </MapArt>
);

const CityMap = () => (
  <MapArt viewBox="0 0 1050 960" preserveAspectRatio="xMidYMid slice" aria-hidden="true">
    <rect width="1050" height="960" fill="#0c0c0c" />
    <path d="M0 380 20 370 50 368V560L34 620 0 600zM0 180 8 185 12 200 0 202z" fill="#272727" />
    <g fill="none" stroke="#333" strokeWidth="2">
      <path d="M0 110 50 150M0 270H50M0 285H50M0 175 50 200M0 155 50 182M0 295 50 325M0 90 20 150M0 145 50 105M0 720 34 600M5 750 50 620M10 790Q30 760 50 700M0 700 50 760M8 640 14 700" />
    </g>
    <g fill="none" stroke="#030303" strokeWidth="11">
      <path d="M0 85 45 0M0 142 55 100M0 278H60M0 165 55 195M0 92 50 150M0 300 55 328M0 540 26 560 50 520" />
    </g>
  </MapArt>
);

/* ---------- icons ---------- */

const SignalIcon = () => (
  <svg width="58" height="38" viewBox="0 0 58 38" fill="#fff" aria-hidden="true">
    <rect y="23" width="10" height="15" rx="3" />
    <rect x="16" y="16" width="10" height="22" rx="3" />
    <rect x="32" y="8" width="10" height="30" rx="3" />
    <rect x="48" width="10" height="38" rx="3" />
  </svg>
);

const WifiIcon = () => (
  <svg width="51" height="38" viewBox="0 0 51 38" fill="#fff" aria-hidden="true">
    <path d="M25.500 0C35.500 0 44 3.600 50.300 9.600q1 1 0 2l-3.600 3.600q-1 1-2 0C39.500 10.300 33 7.400 25.500 7.400S11.500 10.300 6.300 15.200q-1 1-2 0L.7 11.600q-1-1 0-2C7 3.600 15.500 0 25.500 0z" />
    <path d="M25.500 12.700c6.200 0 11.500 2.300 15.600 6 1 1 1 1.600 0 2.600l-3.300 3.300q-1.200 1-2.400 0c-2.700-2.500-6-3.900-9.900-3.900s-7.200 1.400-9.900 3.900q-1.200 1-2.400 0l-3.300-3.300c-1-1-1-1.600 0-2.600 4.100-3.700 9.400-6 15.600-6z" />
    <path d="M25.500 25.500c2.700 0 5 1 6.800 2.500q1.200 1.100 0 2.300l-5.600 6.200q-1.200 1.200-2.400 0l-5.600-6.200q-1.200-1.200 0-2.300c1.800-1.500 4.100-2.500 6.800-2.500z" />
  </svg>
);

const BatteryIcon = () => (
  <svg width="82" height="42" viewBox="0 0 82 42" aria-hidden="true">
    <rect x="1.500" y="3" width="72" height="36" rx="12" fill="none" stroke="#77787a" strokeWidth="3" />
    <path d="M78 15q4 2 4 6t-4 6z" fill="#77787a" />
    <rect x="6" y="7" width="63" height="28" rx="8" fill="#30c857" />
    <path d="M41.500 2.500 25 22.500q-1 2 1 2h9.500L31.500 40.500l19-20.500q1-2-1-2H40z" fill="#8e8f93" stroke="#111415" strokeWidth="7" strokeLinejoin="round" />
    <path d="M41.500 2.500 25 22.500q-1 2 1 2h9.500L31.500 40.500l19-20.500q1-2-1-2H40z" fill="#8e8f93" stroke="#8e8f93" strokeWidth="1" strokeLinejoin="round" />
  </svg>
);

const CupIcon = () => (
  <svg width="49" height="55" viewBox="0 0 49 55" fill="none" stroke="currentColor" strokeWidth="6" strokeLinejoin="round" aria-hidden="true">
    <rect x="3" y="3" width="43" height="12" rx="1" />
    <path d="M7.500 15 11 50q.3 2 2 2h23q1.700 0 2-2l3.500-35" />
    <path d="M24.500 41 17 33.500c-4-4 1-10.500 5.500-7.500l2 1.500 2-1.500c4.500-3 9.500 3.500 5.500 7.500z" fill="currentColor" stroke="none" />
  </svg>
);

const ChevronIcon = () => (
  <svg width="22" height="36" viewBox="0 0 22 36" fill="none" stroke="#d8c2c6" strokeWidth="5" aria-hidden="true">
    <path d="M3 3 18 18 3 33" />
  </svg>
);

const PlusIcon = () => (
  <svg width="32" height="32" viewBox="0 0 32 32" stroke="currentColor" strokeWidth="4" aria-hidden="true">
    <path d="M16 0v32M0 16h32" />
  </svg>
);

const RankingIcon = () => (
  <svg width="43" height="39" viewBox="0 0 43 39" fill="none" stroke="currentColor" strokeWidth="4" strokeLinejoin="round" strokeLinecap="round" aria-hidden="true">
    <path d="M4 36V15h12M16 36V2h11v34M27 21h12v15M2 37h39" />
  </svg>
);

const MapIcon = () => (
  <svg width="58" height="58" viewBox="0 0 58 58" fill="none" stroke="currentColor" strokeWidth="6" strokeLinejoin="round" aria-hidden="true">
    <path d="M3 9 19 3 38.500 9 55 3V49L38.500 55 19 49 3 55zM19 3V49M38.500 9V55" />
  </svg>
);

const GlobeIcon = () => (
  <svg width="72" height="72" viewBox="0 0 72 72" fill="none" stroke="currentColor" strokeWidth="5" aria-hidden="true">
    <circle cx="36" cy="36" r="33" />
    <ellipse cx="36" cy="36" rx="14" ry="33" />
    <path d="M3 36h66" />
  </svg>
);

const LuggageIcon = () => (
  <svg width="46" height="66" viewBox="0 0 46 66" fill="none" stroke="currentColor" aria-hidden="true">
    <rect x="3" y="17" width="40" height="42" rx="3" strokeWidth="6" />
    <path d="M16 16V4q0-1 1-1h12q1 0 1 1v12" strokeWidth="5" />
    <path d="M12.500 23v30M23 23v30M33.500 23v30" strokeWidth="5" />
    <path d="M7 61h6v4H9zM33 61h6l-2 4h-4z" fill="currentColor" strokeWidth="1" />
  </svg>
);

/* ---------- screen ---------- */

export default function App() {
  return (
    <>
      <GlobalStyle />
      <Screen>
        <StatusBar>
          <Clock>09:41</Clock>
          <StatusIcons>
            <SignalIcon />
            <WifiIcon />
            <BatteryIcon />
          </StatusIcons>
        </StatusBar>

        <Header>
          <Avatar aria-label="Profile DE">DE</Avatar>
          <HeaderActions>
            <IconButton aria-label="Support">
              <CupIcon />
            </IconButton>
            <HomePill>
              <Dot />
              Home
            </HomePill>
          </HeaderActions>
        </Header>

        <main>
          <Stats>
            <Stat>
              <StatLabel>DAYS TRAVELLED</StatLabel>
              <StatValue>494</StatValue>
            </Stat>
            <Stat>
              <StatLabel>TOTAL TRIPS</StatLabel>
              <StatValue>60</StatValue>
            </Stat>
            <Stat>
              <StatLabel>COUNTRIES</StatLabel>
              <StatValue>
                38<StatTotal>/195</StatTotal>
              </StatValue>
            </Stat>
          </Stats>

          <Histogram>
            {weeks.map((week, n) => (
              <Week key={n}>
                {week.split("").map((day, m) => (
                  <Day key={m} $color={palette[day]} />
                ))}
              </Week>
            ))}
          </Histogram>
          <Months>
            {months.map(([name, span]) => (
              <Month key={name} $span={span}>
                {name}
              </Month>
            ))}
          </Months>

          <section>
            <SectionHeader $top={30} $right={57}>
              <SectionTitle>Trips</SectionTitle>
              <SectionActions>
                <IconButton aria-label="All trips">
                  <ChevronIcon />
                </IconButton>
                <AddButton aria-label="Add trip">
                  <PlusIcon />
                </AddButton>
              </SectionActions>
            </SectionHeader>
            <Carousel>
              <TripCard>
                <HelsinkiMap />
                <CardBody>
                  <CardTop>
                    <FlagBadge>
                      <svg width="66" height="45" viewBox="0 0 66 45" aria-hidden="true">
                        <rect width="66" height="45" fill="#fff" />
                        <path d="M18 0h13v45H18zM0 16h66v14H0z" fill="#002f6c" />
                      </svg>
                    </FlagBadge>
                    <CardTopRight>
                      <RankingIcon />
                      <Companion>MA</Companion>
                    </CardTopRight>
                  </CardTop>
                  <div>
                    <TripTitle>Helsinki, a day</TripTitle>
                    <TripDates>Sep 5 – Sep 7 · 3 days</TripDates>
                    <Attribution>© OpenStreetMap · © CARTO</Attribution>
                  </div>
                </CardBody>
                <Pin>
                  <PinDot />
                  <PinLabel>
                    <PinText>Helsinki</PinText>
                  </PinLabel>
                </Pin>
              </TripCard>
              <TripCard>
                <CityMap />
                <CardBody />
              </TripCard>
            </Carousel>
          </section>

          <section>
            <SectionHeader $top={86} $right={70}>
              <SectionTitle>Countries</SectionTitle>
              <IconButton aria-label="All countries">
                <ChevronIcon />
              </IconButton>
            </SectionHeader>
            <Mosaic>
              <Stack $grow={197}>
                <Country code="ES" h={241} days={36} />
                <Country code="LV" h={221} days={33} />
              </Stack>
              <Stack $grow={197}>
                <Country code="JP" h={179} days={27} />
                <Country code="IT" h={166} days={25} />
                <Country code="FI" h={146} days={21} />
              </Stack>
              <Stack $grow={157}>
                <Country code="HR" h={181} days={22} />
                <Country code="SE" h={158} days={18} />
                <Country code="PL" h={148} days={17} />
              </Stack>
              <Stack $grow={535}>
                <Strip>
                  <Country code="LT" h={125} grow={1} />
                  <Country code="CZ" h={125} grow={1} />
                  <Country code="GB" h={125} grow={1} />
                </Strip>
                <Strip>
                  <Stack $grow={139}>
                    <Country code="TH" h={139} label={false} />
                    <Country code="IS" h={128} />
                    <Country code="VN" h={120} label={false} />
                  </Stack>
                  <Stack $grow={390}>
                    <Strip>
                      <Country code="GR" h={114} grow={134} label={false} />
                      <Country code="TR" h={114} grow={122} label={false} />
                      <Country code="EG" h={114} grow={122} />
                    </Strip>
                    <Strip>
                      <Country code="PT" h={118} grow={107} />
                      <Country code="ME" h={118} grow={96} label={false} />
                      <Country code="MA" h={118} grow={85} label={false} />
                      <Country code="GE" h={118} grow={85} label={false} />
                    </Strip>
                    <Strip>
                      <Country code="US" h={90} grow={106} />
                      <Country code="MT" h={90} grow={99} label={false} />
                      <Country code="NL" h={90} grow={83} label={false} />
                      <Country code="IE" h={90} grow={84} label={false} />
                    </Strip>
                  </Stack>
                </Strip>
              </Stack>
            </Mosaic>
          </section>
        </main>
      </Screen>

      <Nav aria-label="Main">
        <NavButton aria-label="Map">
          <MapIcon />
        </NavButton>
        <NavButton $active aria-label="Overview">
          <GlobeIcon />
        </NavButton>
        <NavButton aria-label="Trips">
          <LuggageIcon />
        </NavButton>
      </Nav>
    </>
  );
}
